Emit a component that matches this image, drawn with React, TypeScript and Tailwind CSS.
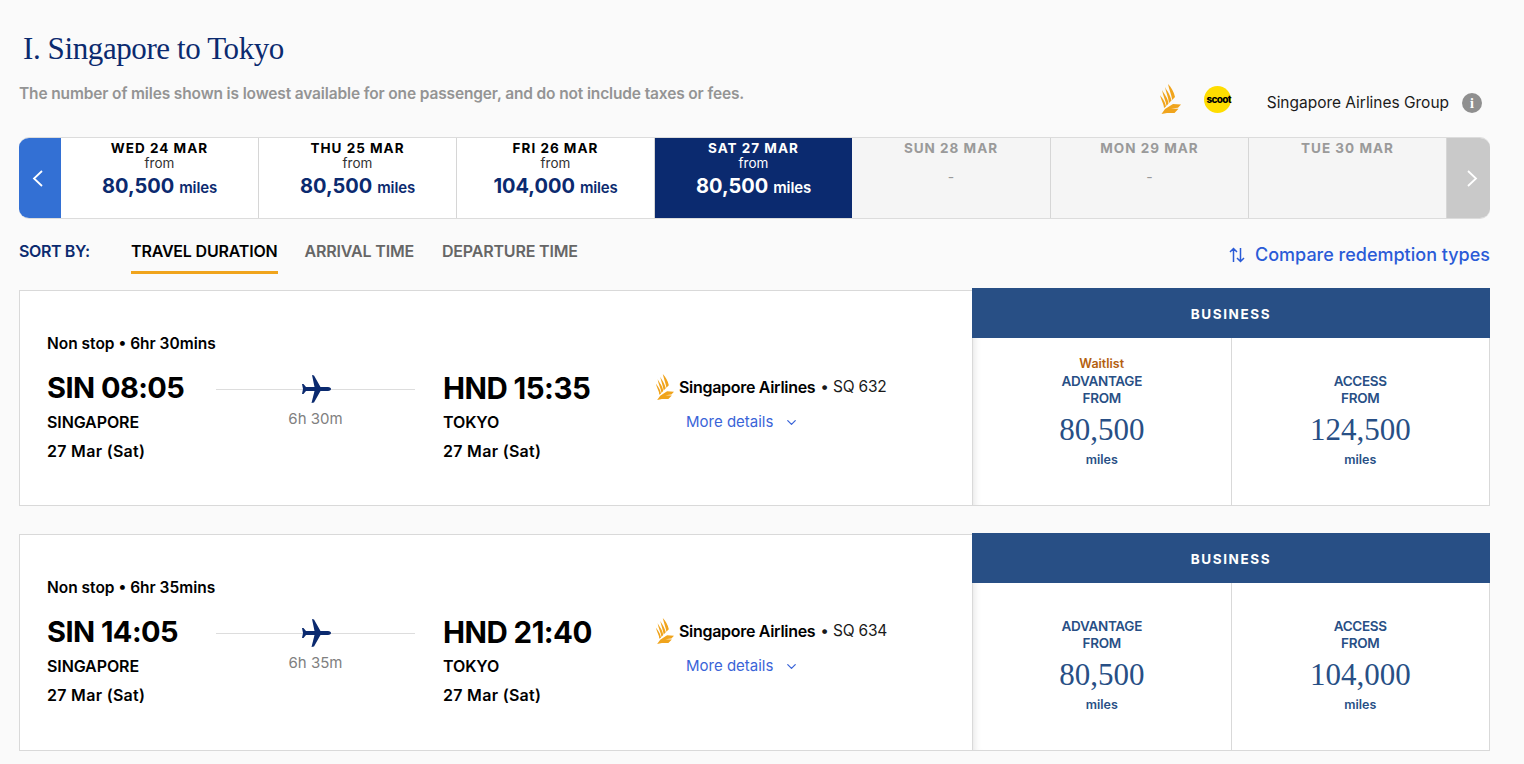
import { ChevronDown } from "lucide-react";

const days = [
  { label: "WED 24 MAR", miles: "80,500", width: "w-[198px]" },
  { label: "THU 25 MAR", miles: "80,500", width: "w-[198px]" },
  { label: "FRI 26 MAR", miles: "104,000", width: "w-[198px]" },
  { label: "SAT 27 MAR", miles: "80,500", active: true, width: "w-[197px]" },
  { label: "SUN 28 MAR", empty: "-", width: "w-[199px]" },
  { label: "MON 29 MAR", empty: "-", width: "w-[198px]" },
  { label: "TUE 30 MAR", empty: "", width: "w-[198px]" },
];

const flights = [
  { total: "6hr 30mins", dep: "SIN 08:05", arr: "HND 15:35", dur: "6h 30m", no: "SQ 632", adv: "80,500", acc: "124,500", waitlist: true },
  { total: "6hr 35mins", dep: "SIN 14:05", arr: "HND 21:40", dur: "6h 35m", no: "SQ 634", adv: "80,500", acc: "104,000", waitlist: false },
];

function Bird({ className }: { className?: string }) {
  return (
    <svg viewBox="0 0 22 30" className={className} fill="#f0a41c">
      <path d="M9 0 C12 3 15 8 16 13 L13.2 16 C12.5 11 10 5 9 0Z" />
      <path d="M6 3 C8 7 11 10 12.5 16.5 L10 19 C9.5 14 7 8 6 3Z" />
      <path d="M3 6 C5 10 9 14 9.5 19.5 L7.5 22 C7 17 4 12 3 6Z" />
      <path d="M1 11 C3 14 6 17 7 22.5 L5 24 C5 20 2 16 1 11Z" />
      <path d="M2.5 30 L6 25 L14 20 L22 20.5 L19 23.8 L12 24.5 L19.5 24.8 L15.5 29 L8 29Z" />
    </svg>
  );
}

function Plane() {
  return (
    <svg viewBox="0 0 30 28" className="h-[28px] w-[30px]" fill="#0b2a6f">
      <path d="M11 0 L13 0.5 L19.5 12 L27 12 C29 12 30 13.2 30 14 C30 14.8 29 16 27 16 L19.5 16 L13 27.5 L10.5 28 L13.5 16 L5 16 L2.5 19 L1 19 L2 14 L1 9 L2.5 9 L5 12 L13.5 12Z" />
    </svg>
  );
}

function Fare({ name, miles, waitlist }: { name: string; miles: string; waitlist?: boolean }) {
  return (
    <div className="relative flex flex-1 flex-col items-center pt-[35px] text-[#284f85]">
      {waitlist && (
        <div className="absolute top-[17px] text-[12.5px] font-semibold leading-[17px] text-[#b3600f]">Waitlist</div>
      )}
      <div className="text-[13.5px] font-semibold leading-[17px] tracking-[-0.3px]">{name}</div>
      <div className="text-[13.5px] font-semibold leading-[17px] tracking-[-0.3px]">FROM</div>
      <div className="mt-[5px] font-['Liberation_Serif',serif] text-[31px] leading-[36px]">{miles}</div>
      <div className="mt-[3px] text-[12.5px] font-semibold leading-[17px]">miles</div>
    </div>
  );
}

export default function App() {
  return (
    <div className="h-[764px] overflow-hidden bg-[#fafafa] px-[19px] font-['Inter',sans-serif]">
      <div className="w-[1471px]">
        <h1 className="pl-[4px] pt-[30px] font-['Liberation_Serif',serif] text-[31px] leading-[38px] tracking-[-0.4px] text-[#0b2a6f]">
          I. Singapore to Tokyo
        </h1>
        <div className="flex h-[69px] items-start justify-between">
          <p className="pt-[16px] text-[15.5px] font-semibold leading-[20px] tracking-[-0.14px] text-[#949494]">
            The number of miles shown is lowest available for one passenger, and do not include taxes or fees.
          </p>
          <div className="flex items-center pr-[8px] pt-[20px]">
            <Bird className="h-[30px] w-[22px] -translate-y-[4px]" />
            <div className="ml-[23px] mr-[36px] flex h-[27px] w-[27px] -translate-y-[4px] items-center justify-center rounded-full bg-[#ffdd00] text-[10px] font-extrabold tracking-[-0.7px] text-black">
              <span className="pl-[3px]">scoot</span>
            </div>
            <span className="text-[15.5px] leading-[20px] tracking-[-0.02px] text-[#1a1a1a]">Singapore Airlines Group</span>
            <div className="ml-[13px] flex h-[20px] w-[20px] items-center justify-center rounded-full bg-[#8f8f8f] font-['Liberation_Serif',serif] text-[14px] font-bold text-white">
              i
            </div>
          </div>
        </div>

        {/* date strip */}
        <div className="flex h-[82px] overflow-hidden rounded-[10px] border-y border-[#dcdcdc] bg-white">
          <div className="flex w-[42px] items-center justify-center bg-[#3370d4] pr-[6px] text-white">
            <svg viewBox="0 0 11 17" className="h-[17px] w-[11px]" fill="none" stroke="currentColor" strokeWidth="1.8">
              <path d="M10 1 L2 8.5 L10 16" />
            </svg>
          </div>
          {days.map((d, i) => (
            <div
              key={d.label}
              className={`${d.width} ${
                d.active
                  ? "bg-[#0b2a6f] pt-[1px] text-center text-white"
                  : d.empty !== undefined
                    ? "border-r border-[#d6d6d6] bg-[#f5f5f5] pt-[1px] text-center text-[#9a9a9a]"
                    : "border-r border-[#d6d6d6] pt-[1px] text-center text-black"
              }`}
            >
              <div className="text-[13.5px] font-bold leading-[18px] tracking-[1px]">{d.label}</div>
              {d.miles ? (
                <>
                  <div className={i === 3 ? "text-[13.5px] leading-[12px]" : "text-[13.5px] leading-[12px] text-[#333333]"}>from</div>
                  <div className={i === 3 ? "mt-[2px] leading-[30px]" : "mt-[2px] leading-[30px] text-[#0b2a6f]"}>
                    <span className="text-[20px] font-bold">{d.miles}</span>
                    <span className="ml-[5px] text-[15px] font-semibold tracking-[-0.15px]">miles</span>
                  </div>
                </>
              ) : (
                <div className="mt-[5px] text-[14px] leading-[30px]">{d.empty}</div>
              )}
            </div>
          ))}
          <div className="flex flex-1 items-center justify-center bg-[#c9c9c9] pl-[8px] text-white">
            <svg viewBox="0 0 11 17" className="h-[17px] w-[11px]" fill="none" stroke="currentColor" strokeWidth="1.8">
              <path d="M1 1 L9 8.5 L1 16" />
            </svg>
          </div>
        </div>

        {/* sort row */}
        <div className="flex h-[69px] items-start justify-between">
          <div className="flex pt-[22px] text-[16px] font-semibold leading-[21px] tracking-[-0.18px]">
            <span className="w-[112px] tracking-[-0.4px] text-[#0b2a6f]">SORT BY:</span>
            <span className="h-[33px] border-b-[3px] border-[#f0a41c] text-black">TRAVEL DURATION</span>
            <span className="ml-[27px] text-[#666666]">ARRIVAL TIME</span>
            <span className="ml-[28px] text-[#666666]">DEPARTURE TIME</span>
          </div>
          <div className="flex items-center pt-[25px] text-[18px] font-medium leading-[22px] text-[#2a5bd7]">
            <svg viewBox="0 0 16 16" className="mr-[10px] h-[16px] w-[16px]" fill="none" stroke="currentColor" strokeWidth="1.5">
              <path d="M4.5 15V1.5M1 5l3.5-3.5L8 5M11.5 1v13.5M8 11l3.5 3.5L15 11" />
            </svg>
            Compare redemption types
          </div>
        </div>

        <div className="flex flex-col gap-[27px]">
          {flights.map((f, i) => (
            <div key={f.no} className="flex h-[218px] items-stretch">
              <div className={i === 0 ? "mt-[2px] flex-1 border border-r-0 border-[#d9d9d9] bg-white pl-[27px] pt-[43px]" : "mt-[1px] flex-1 border border-r-0 border-[#d9d9d9] bg-white pl-[27px] pt-[43px]"}>
                <div className="text-[15.5px] font-semibold leading-[20px] text-black">Non stop • {f.total}</div>
                <div className="mt-[16px] flex">
                  <div className="w-[169px]">
                    <div className="text-[29px] font-bold leading-[36px] tracking-[-0.55px] text-black">{f.dep}</div>
                    <div className="mt-[5px] text-[16px] font-semibold leading-[22px] tracking-[-0.1px] text-black">SINGAPORE</div>
                    <div className="mt-[7px] text-[16px] font-semibold leading-[22px] tracking-[0.3px] text-black">27 Mar (Sat)</div>
                  </div>
                  <div className="w-[199px]">
                    <div className="relative flex h-[36px] items-center justify-center">
                      <div className="absolute inset-x-0 top-[19px] h-px bg-[#dddddd]" />
                      <div className="relative translate-y-px"><Plane /></div>
                    </div>
                    <div className="mt-[3px] text-center text-[15px] leading-[20px] text-[#808080]">{f.dur}</div>
                  </div>
                  <div className="ml-[28px] w-[212px]">
                    <div className="text-[29.5px] font-bold leading-[36px] tracking-[-0.55px] text-black">{f.arr}</div>
                    <div className="mt-[5px] text-[16px] font-semibold leading-[22px] tracking-[-0.1px] text-black">TOKYO</div>
                    <div className="mt-[7px] text-[16px] font-semibold leading-[22px] tracking-[0.3px] text-black">27 Mar (Sat)</div>
                  </div>
                  <div>
                    <div className="flex h-[34px] items-center">
                      <Bird className="h-[26px] w-[19px]" />
                      <span className="ml-[5px] text-[16px] font-semibold tracking-[-0.3px] text-black">Singapore Airlines</span>
                      <span className="ml-[5px] text-[15.5px] tracking-[-0.2px] text-[#1a1a1a]">• {f.no}</span>
                    </div>
                    <div className="mt-[8px] flex items-center pl-[31px] text-[15px] leading-[20px] text-[#3a64d8]">
                      More details
                      <ChevronDown size={15} className="ml-[11px]" />
                    </div>
                  </div>
                </div>
              </div>
              <div className="flex w-[518px] flex-col">
                <div className="flex h-[50px] items-center justify-center bg-[#284f85] pt-[2px] text-[13.5px] font-bold tracking-[1.6px] text-white">BUSINESS</div>
                <div className="flex flex-1 divide-x divide-[#d9d9d9] border-x border-b border-[#d9d9d9] bg-white shadow-[inset_8px_0_8px_-8px_rgba(0,0,0,0.15)]">
                  <Fare name="ADVANTAGE" miles={f.adv} waitlist={f.waitlist} />
                  <Fare name="ACCESS" miles={f.acc} />
                </div>
              </div>
            </div>
          ))}
        </div>
      </div>
    </div>
  );
}
